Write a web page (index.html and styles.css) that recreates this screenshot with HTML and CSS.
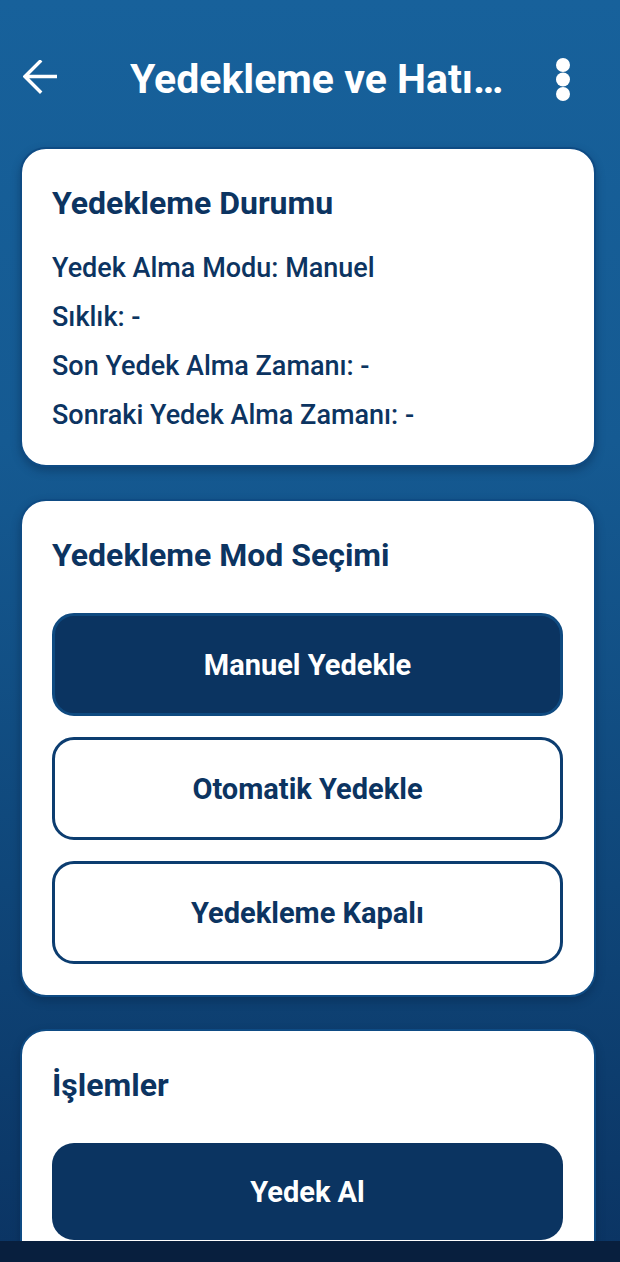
FILE: index.html
```html
<!DOCTYPE html>
<html lang="tr">
<head>
<meta charset="utf-8">
<title>Yedekleme ve Hatırlatma</title>
<link rel="stylesheet" href="styles.css">
</head>
<body>
<div class="screen">
  <header class="topbar">
    <button class="icon-btn back" aria-label="Geri">
      <svg width="34" height="34" viewBox="0 0 34 34"><path d="M33 16.5H3M17 1.5L2 16.5L17 31.5" fill="none" stroke="#fff" stroke-width="3.4" stroke-linecap="square" stroke-linejoin="miter"/></svg>
    </button>
    <h1 class="title">Yedekleme ve Hatırlatma Ayarları</h1>
    <button class="icon-btn more" aria-label="Menü">
      <svg width="16" height="44" viewBox="0 0 16 44"><circle cx="8" cy="7" r="7" fill="#fff"/><circle cx="8" cy="21.5" r="7" fill="#fff"/><circle cx="8" cy="36" r="7" fill="#fff"/></svg>
    </button>
  </header>

  <main class="content">
    <section class="card card-info">
      <h2 class="card-title">Yedekleme Durumu</h2>
      <div class="info-list">
        <p class="info">Yedek Alma Modu: Manuel</p>
        <p class="info">Sıklık: -</p>
        <p class="info">Son Yedek Alma Zamanı: -</p>
        <p class="info">Sonraki Yedek Alma Zamanı: -</p>
      </div>
    </section>

    <section class="card card-actions">
      <h2 class="card-title">Yedekleme Mod Seçimi</h2>
      <div class="btn-list">
        <button class="btn btn-filled">Manuel Yedekle</button>
        <button class="btn btn-outline">Otomatik Yedekle</button>
        <button class="btn btn-outline">Yedekleme Kapalı</button>
      </div>
    </section>

    <section class="card card-actions">
      <h2 class="card-title">İşlemler</h2>
      <div class="btn-list">
        <button class="btn btn-primary">Yedek Al</button>
      </div>
    </section>
  </main>
  <div class="navbar"></div>
</div>
</body>
</html>
```

FILE: styles.css
```css
html, body {
  margin: 0;
  padding: 0;
  height: 100%;
}
body {
  font-family: Roboto, "Noto Sans", "Liberation Sans", sans-serif;
  background: #0b3564;
  overflow: hidden;
}
.screen {
  position: relative;
  height: 1262px;
  overflow: hidden;
  background: linear-gradient(180deg, #17619b 0%, #155a92 35%, #0f4679 70%, #0b3463 100%);
}
.topbar {
  display: flex;
  align-items: center;
  height: 74px;
  padding: 40px 24px 0 23px;
}
.icon-btn {
  background: none;
  border: 0;
  padding: 0;
  display: flex;
  align-items: center;
  justify-content: center;
}
.back {
  width: 34px;
  height: 34px;
}
.title {
  margin: 4px 0 0 73px;
  flex: 0 0 378px;
  color: #fff;
  font-size: 41px;
  font-weight: 700;
  white-space: nowrap;
  overflow: hidden;
  text-overflow: ellipsis;
  line-height: 48px;
}
.more {
  margin-left: auto;
  margin-right: 25px;
  width: 16px;
  height: 44px;
  margin-top: 6px;
}
.content {
  padding: 33px 24px 0 20px;
  display: flex;
  flex-direction: column;
  gap: 32px;
}
.card {
  background: #fff;
  border: 2px solid #0e4b84;
  border-radius: 26px;
  box-shadow: 0 4px 8px rgba(5, 30, 60, 0.35);
  padding: 34px 31px 33px 30px;
}
.card-actions {
  padding-bottom: 31px;
}
.card-title {
  margin: 0;
  color: #0c3461;
  font-size: 32px;
  font-weight: 700;
  line-height: 40px;
}
.info-list {
  margin-top: 28px;
  display: flex;
  flex-direction: column;
  gap: 15px;
}
.info {
  margin: 0;
  color: #0c3461;
  font-size: 27px;
  font-weight: 500;
  line-height: 34px;
}
.btn-list {
  margin-top: 38px;
  display: flex;
  flex-direction: column;
  gap: 21px;
}
.btn {
  font-family: Roboto, "Noto Sans", "Liberation Sans", sans-serif;
  font-size: 29px;
  font-weight: 700;
  height: 103px;
  border-radius: 22px;
  border: 3px solid #0c3d70;
  width: 100%;
}
.btn-filled {
  background: #0b3461;
  border-color: #0f4a80;
  color: #fff;
}
.btn-outline {
  background: #fff;
  color: #0c3461;
}
.btn-primary {
  background: #0b3461;
  border: 0;
  color: #fff;
  height: 97px;
}
.navbar {
  position: absolute;
  left: 0;
  right: 0;
  bottom: 0;
  height: 21px;
  background: #081f3e;
}
```
